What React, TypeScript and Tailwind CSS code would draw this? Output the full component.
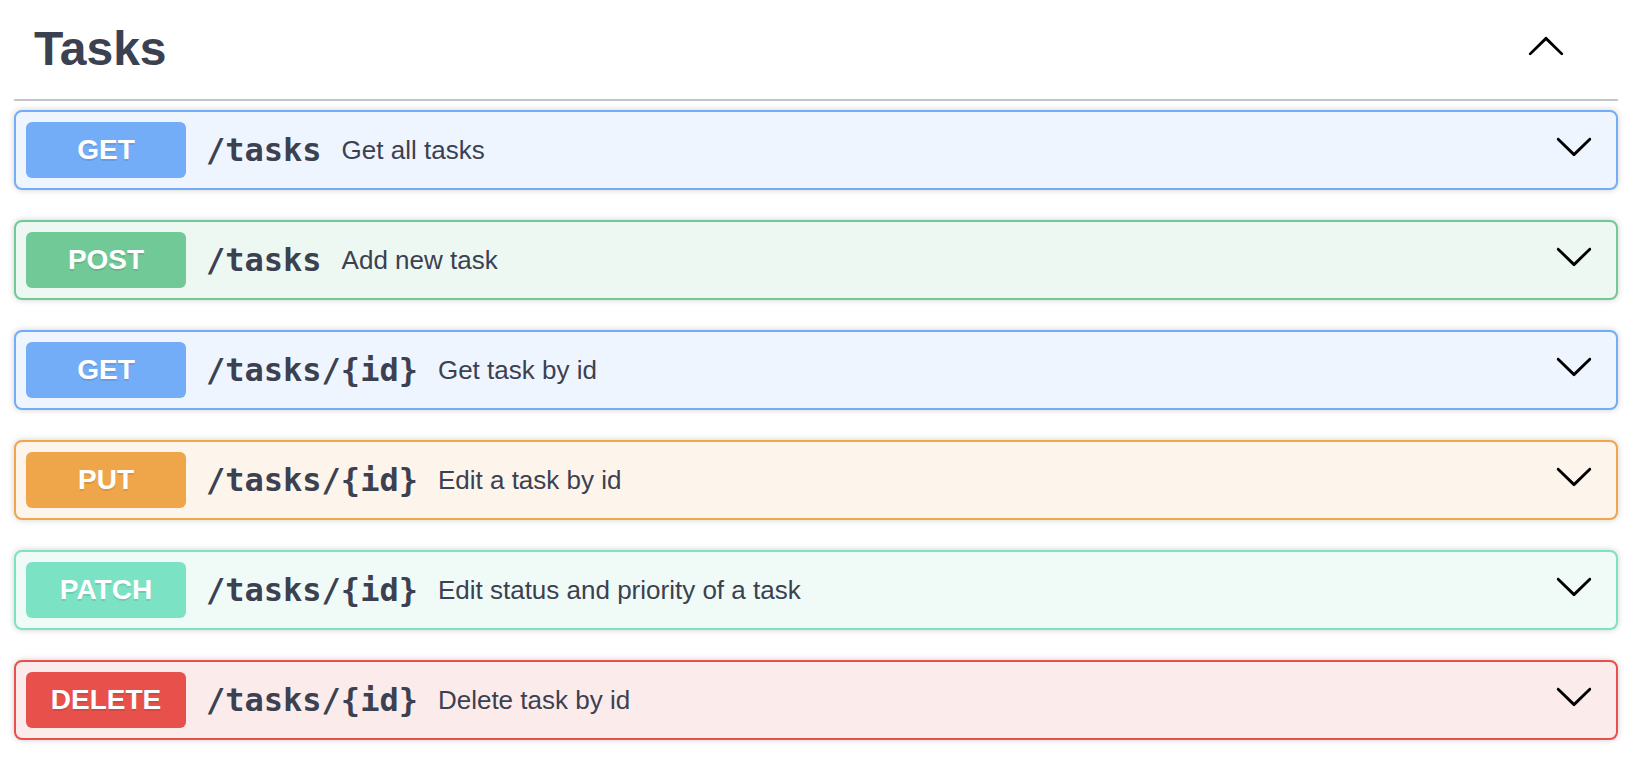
import React from "react";

type Op = {
  method: string;
  path: string;
  desc: string;
  badge: string;
  border: string;
  bg: string;
};

const ops: Op[] = [
  { method: "GET", path: "/tasks", desc: "Get all tasks", badge: "bg-[#73adf7]", border: "border-[#73adf7]", bg: "bg-[#eff5fe]" },
  { method: "POST", path: "/tasks", desc: "Add new task", badge: "bg-[#70c996]", border: "border-[#70c996]", bg: "bg-[#eef8f2]" },
  { method: "GET", path: "/tasks/{id}", desc: "Get task by id", badge: "bg-[#73adf7]", border: "border-[#73adf7]", bg: "bg-[#eff5fe]" },
  { method: "PUT", path: "/tasks/{id}", desc: "Edit a task by id", badge: "bg-[#efa64b]", border: "border-[#efa64b]", bg: "bg-[#fdf4eb]" },
  { method: "PATCH", path: "/tasks/{id}", desc: "Edit status and priority of a task", badge: "bg-[#7ce2c4]", border: "border-[#7ce2c4]", bg: "bg-[#f0fbf8]" },
  { method: "DELETE", path: "/tasks/{id}", desc: "Delete task by id", badge: "bg-[#e8504b]", border: "border-[#e8504b]", bg: "bg-[#fcebeb]" },
];

function ArrowDown() {
  return (
    <svg width="40" height="40" viewBox="0 0 20 20" className="mb-[8px] shrink-0" aria-hidden="true">
      <path
        fill="#000"
        d="M17.418 6.109c.272-.268.709-.268.979 0s.271.701 0 .969l-7.908 7.83c-.27.268-.707.268-.979 0l-7.908-7.83c-.27-.268-.27-.701 0-.969.271-.268.709-.268.979 0L10 13.25l7.418-7.141z"
      />
    </svg>
  );
}

function ArrowUp() {
  return (
    <svg width="40" height="40" viewBox="0 0 20 20" className="mb-[7px] shrink-0" aria-hidden="true">
      <path
        fill="#000"
        d="M17.418 14.908c.272.268.709.268.979 0s.271-.701 0-.969l-7.908-7.83c-.27-.268-.707-.268-.979 0l-7.908 7.83c-.27.268-.27.701 0 .969.271.268.709.268.979 0L10 7.767l7.418 7.141z"
      />
    </svg>
  );
}

export default function App() {
  return (
    <div className="min-h-[764px] bg-white px-[14px] font-['Liberation_Sans',Arial,sans-serif] text-[#3b4151]">
      <div className="flex items-center border-b-2 border-[#c4c5ca] pl-[20px] pr-[52px] pt-[21px] pb-[23px]">
        <h3 className="flex-1 text-[48px] font-bold leading-[55px]">Tasks</h3>
        <ArrowUp />
      </div>
      <div className="mt-[9px] flex flex-col gap-[30px]">
        {ops.map((op, i) => (
          <div
            key={i}
            className={`flex h-[80px] items-center rounded-[8px] border-2 ${op.border} ${op.bg} pl-[10px] pr-[22px] shadow-[0_0_6px_rgba(0,0,0,0.19)]`}
          >
            <div
              className={`flex h-[56px] w-[160px] shrink-0 items-center justify-center rounded-[6px] ${op.badge} text-[28px] font-bold leading-[normal] text-white [text-shadow:0_2px_0_rgba(0,0,0,0.1)]`}
            >
              {op.method}
            </div>
            <span className="px-[20px] font-['DejaVu_Sans_Mono',monospace] text-[32px] font-bold leading-[normal] text-[#3b4151]">
              {op.path}
            </span>
            <span className="flex-1 text-[26px] leading-[normal] text-[#3b4151]">{op.desc}</span>
            <ArrowDown />
          </div>
        ))}
      </div>
    </div>
  );
}
